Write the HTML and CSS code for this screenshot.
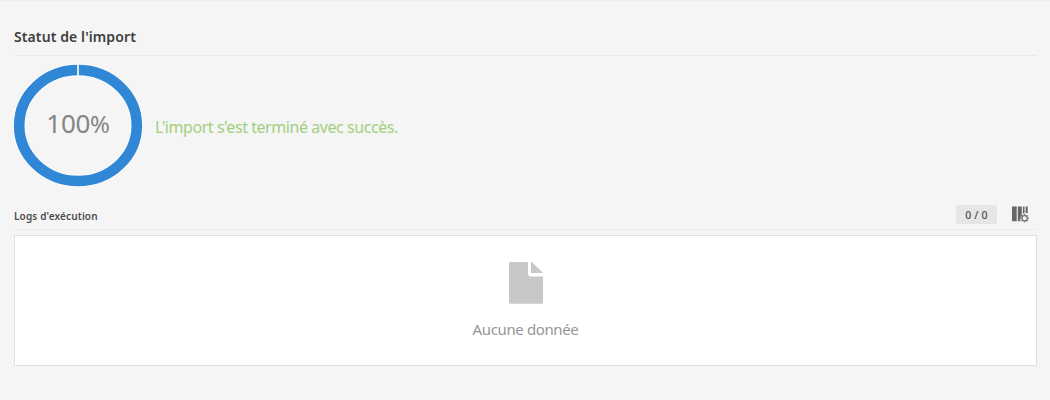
FILE: index.html
```html
<!DOCTYPE html>
<html lang="fr">
<head>
<meta charset="utf-8">
<title>Statut de l'import</title>
<link rel="stylesheet" href="styles.css">
</head>
<body>
<main class="page">
  <h1 class="title"><span>Statut de l'import</span></h1>
  <section class="status">
    <div class="progress">
      <svg class="ring" viewBox="0 0 130 123" aria-hidden="true">
        <ellipse class="ring-halo" cx="65" cy="61.5" rx="58.8" ry="55.5"/>
        <ellipse class="ring-track" cx="65" cy="61.5" rx="58.8" ry="55.5"/>
        <path class="ring-gap" d="M65 0V13"/>
      </svg>
      <span class="percent">100<span class="sign">%</span></span>
    </div>
    <p class="message">L'import s'est terminé avec succès.</p>
  </section>
  <section class="logs">
    <header class="logs-header">
      <h2 class="logs-title">Logs d'exécution</h2>
      <span class="counter">0 / 0</span>
      <svg class="columns-icon" viewBox="0 0 18 17" aria-label="Configurer la liste">
        <path fill="#686868" d="M0 .5h4.7v14.8H0zM5.8.5h4v9.2l-1.5 2.1v3.5H5.8zM10.9.5h1.6v6.7l-1.6.8zM13.6.5h2.1v6.4h-2.1z"/>
        <circle cx="12.6" cy="12.2" r="2.6" fill="none" stroke="#777" stroke-width="1.3"/>
        <path d="M12.6 8.1v1.3M12.6 15v1.3M8.5 12.2h1.3M15.4 12.2h1.3M9.7 9.3l.9.9M14.6 14.2l.9.9M9.7 15.1l.9-.9M14.6 10.2l.9-.9" stroke="#777" stroke-width="1.5"/>
      </svg>
    </header>
    <div class="empty">
      <svg class="file-icon" viewBox="0 0 34 42" aria-hidden="true">
        <path d="M1.3 0H19v11.5a3 3 0 0 0 3 3h12v26a1.3 1.3 0 0 1-1.3 1.3H1.3A1.3 1.3 0 0 1 0 40.5V1.3A1.3 1.3 0 0 1 1.3 0zM22 0h.6L33.5 10.2V11H22z"/>
      </svg>
      <p class="empty-text">Aucune donnée</p>
    </div>
  </section>
</main>
</body>
</html>
```
FILE: styles.css
```css
* { box-sizing: border-box; }
body {
  margin: 0;
  background: #f5f5f5;
  font-family: "Noto Sans", "Open Sans", sans-serif;
}
.page {
  height: 400px;
  padding: 0 13px 0 14px;
  border-top: 1px solid #eeeeee;
}
h1, h2, p { margin: 0; }
.title {
  height: 55px;
  padding-top: 25px;
  border-bottom: 1px solid #e9e9e9;
  color: #404040;
  font-size: 14px;
  font-weight: 600;
  line-height: 22px;
  letter-spacing: 0.1px;
}
.status {
  display: flex;
  align-items: flex-start;
  gap: 12px;
  height: 140px;
  padding-top: 8px;
}
.progress {
  display: grid;
  place-items: center;
  width: 130px;
  height: 123px;
  margin-left: -1px;
}
.progress > * { grid-area: 1 / 1; }
.ring { width: 130px; height: 123px; }
.ring ellipse { fill: none; }
.ring-halo { stroke: #fbfbfb; stroke-width: 12.6; }
.ring-track { stroke: #2f87d5; stroke-width: 10.6; }
.ring-gap { stroke: #edf3f8; stroke-width: 1.8; }
.percent {
  padding-bottom: 4px;
  color: #858585;
  font-size: 26px;
  line-height: 30px;
  letter-spacing: -0.3px;
}
.sign { font-size: 24px; }
.message {
  padding-top: 52px;
  color: #a2cf7e;
  font-size: 16px;
  line-height: 22px;
  letter-spacing: -0.44px;
}
.logs-header {
  display: flex;
  align-items: flex-start;
  height: 34px;
  padding-top: 9px;
  border-bottom: 1px solid #eaeaea;
}
.logs-title {
  flex: 1;
  padding-top: 3px;
  color: #4b4b4b;
  font-size: 10px;
  font-weight: 600;
  line-height: 16px;
  letter-spacing: 0.15px;
}
.counter {
  width: 41px;
  height: 19px;
  margin-right: 15px;
  border-radius: 2px;
  background: #e6e6e6;
  color: #4b4b4b;
  font-size: 10.5px;
  font-weight: 500;
  line-height: 20px;
  text-align: center;
  letter-spacing: 0.2px;
}
.columns-icon { width: 18px; height: 17px; margin: 1px 7px 0 0; }
.empty {
  display: flex;
  flex-direction: column;
  align-items: center;
  height: 131px;
  margin-top: 5px;
  padding-top: 26px;
  border: 1px solid #dfdfdf;
  background: #fff;
}
.file-icon { width: 34px; height: 42px; fill: #c8c8c8; }
.empty-text {
  margin-top: 14px;
  color: #969696;
  font-size: 15px;
  line-height: 22px;
  letter-spacing: -0.38px;
}
```
